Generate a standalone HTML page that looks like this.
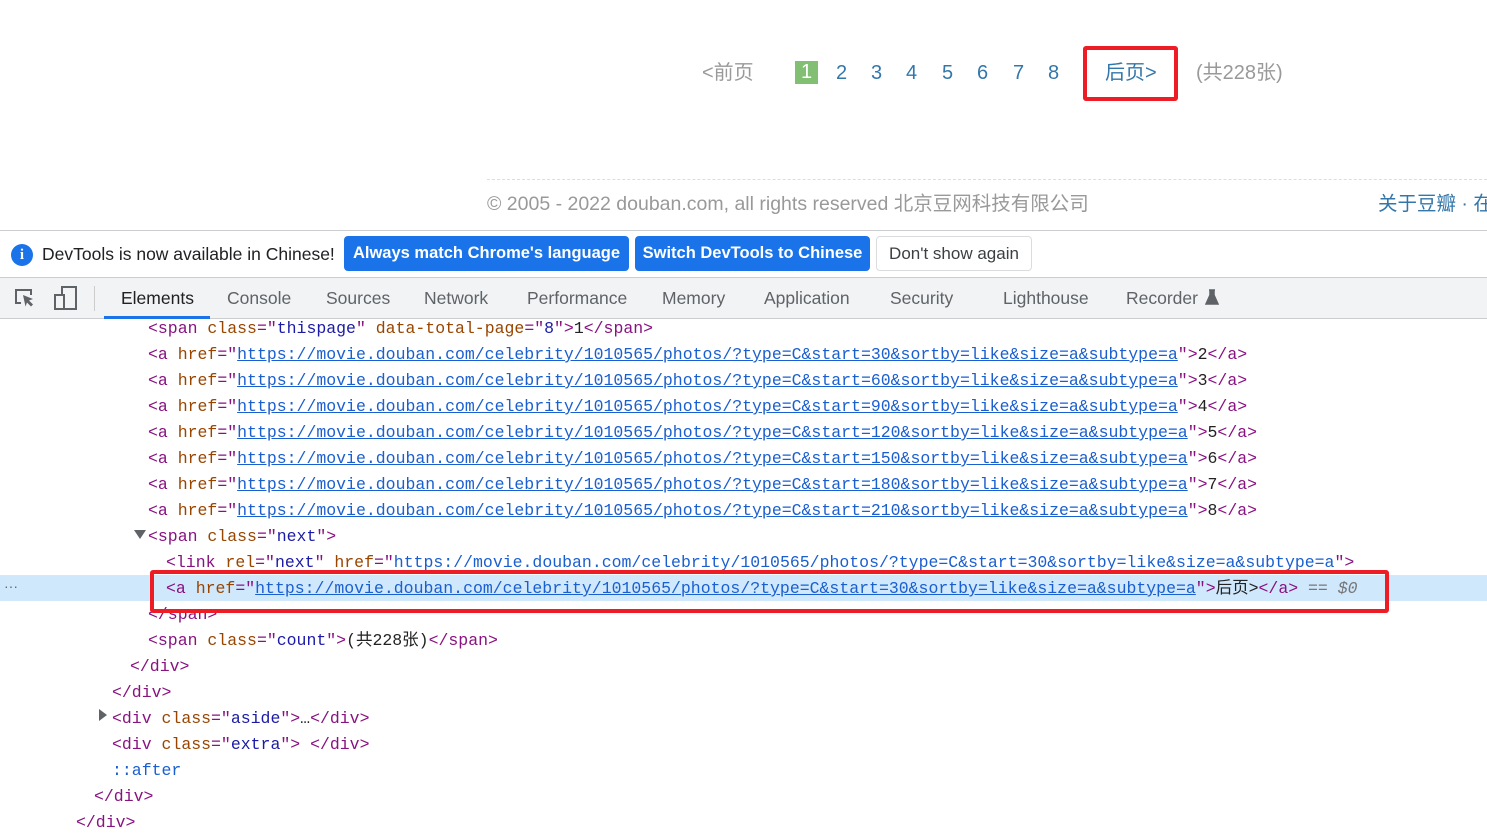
<!DOCTYPE html>
<html><head><meta charset="utf-8"><style>
*{margin:0;padding:0;box-sizing:border-box}
body{width:1487px;height:837px;overflow:hidden;background:#fff;position:relative;font-family:"Liberation Sans","Noto Sans CJK SC",sans-serif}
.a{position:absolute;white-space:nowrap}
.pg{font-size:20px;top:61px;line-height:24px;height:24px;color:#37a}
.code{position:absolute;font-family:"Liberation Mono","Noto Sans CJK SC",monospace;font-size:16.5px;white-space:nowrap;line-height:26px;height:26px;color:#222}
.t{color:#881280}.n{color:#994500}.v{color:#1a1aa6}.u{color:#1a5fd0;text-decoration:underline}
.tab{position:absolute;top:288px;font-size:17.5px;color:#5f6368}
.btn{position:absolute;top:236px;height:35px;background:#1a73e8;border-radius:4px;color:#fff;font-size:16.5px;font-weight:bold;text-align:center;line-height:35px;white-space:nowrap}
</style></head><body>
<div class="a pg" style="left:702px;color:#999">&lt;前页</div>
<div class="a" style="left:795px;top:61px;width:23px;height:23px;background:#83bf73;color:#fff;font-size:20px;text-align:center;line-height:23px">1</div>
<div class="a pg" style="left:836px">2</div>
<div class="a pg" style="left:871px">3</div>
<div class="a pg" style="left:906px">4</div>
<div class="a pg" style="left:942px">5</div>
<div class="a pg" style="left:977px">6</div>
<div class="a pg" style="left:1013px">7</div>
<div class="a pg" style="left:1048px">8</div>
<div class="a pg" style="left:1105px">后页&gt;</div>
<div class="a pg" style="left:1196px;color:#999">(共228张)</div>
<div class="a" style="left:1083px;top:46px;width:95px;height:55px;border:4px solid #ee1c25;border-radius:3px"></div>
<div class="a" style="left:487px;top:179px;width:1000px;border-top:1px dashed #ddd"></div>
<div class="a" style="left:487px;top:192px;font-size:19.5px;line-height:24px;color:#999">© 2005 - 2022 douban.com, all rights reserved 北京豆网科技有限公司</div>
<div class="a" style="left:1378px;top:192px;font-size:19.5px;line-height:24px;color:#37a">关于豆瓣 · 在</div>

<div class="a" style="left:0;top:230px;width:1487px;height:48px;border-top:1px solid #cbcdd1;border-bottom:1px solid #cbcdd1;background:#fff"></div>
<div class="a" style="left:11px;top:244px;width:22px;height:22px;border-radius:50%;background:#1a73e8;color:#fff;font-size:15px;font-weight:bold;text-align:center;line-height:22px;font-family:'Liberation Serif',serif">i</div>
<div class="a" style="left:42px;top:244px;font-size:17.5px;color:#202124">DevTools is now available in Chinese!</div>
<div class="btn" style="left:344px;width:285px">Always match Chrome's language</div>
<div class="btn" style="left:635px;width:235px">Switch DevTools to Chinese</div>
<div class="a" style="left:876px;top:236px;width:156px;height:35px;background:#fff;border:1px solid #dadce0;border-radius:4px;color:#3c4043;font-size:17px;text-align:center;line-height:33px">Don't show again</div>

<div class="a" style="left:0;top:278px;width:1487px;height:41px;background:#f1f3f4;border-bottom:1px solid #cbcdd1"></div>
<svg class="a" style="left:13px;top:286px" width="24" height="24" viewBox="0 0 24 24"><path d="M8 17H3V4h15v5" fill="none" stroke="#5f6368" stroke-width="2"/><path d="M10 9l10 4-4 1.5 4 4-2 2-4-4-1.5 4z" fill="#5f6368"/></svg>
<svg class="a" style="left:52px;top:285px" width="26" height="26" viewBox="0 0 26 26"><rect x="10" y="2" width="14" height="22" fill="none" stroke="#5f6368" stroke-width="2"/><rect x="3" y="10" width="9" height="14" fill="#f1f3f4" stroke="#5f6368" stroke-width="2"/></svg>
<div class="a" style="left:94px;top:286px;width:1px;height:25px;background:#ccc"></div>
<div class="tab" style="left:121px;color:#202124">Elements</div>
<div class="a" style="left:104px;top:316px;width:106px;height:3px;background:#1a73e8"></div>
<div class="tab" style="left:227px">Console</div>
<div class="tab" style="left:326px">Sources</div>
<div class="tab" style="left:424px">Network</div>
<div class="tab" style="left:527px">Performance</div>
<div class="tab" style="left:662px">Memory</div>
<div class="tab" style="left:764px">Application</div>
<div class="tab" style="left:890px">Security</div>
<div class="tab" style="left:1003px">Lighthouse</div>
<div class="tab" style="left:1126px">Recorder</div>
<svg class="a" style="left:1205px;top:289px" width="14" height="16" viewBox="0 0 14 16"><path d="M4 1h6M5 1v5L1 15h12L9 6V1" fill="#5f6368" stroke="#5f6368" stroke-width="1.5"/></svg>

<div class="a" style="left:0;top:575px;width:1487px;height:26px;background:#cfe8fc"></div>
<div class="a" style="left:4px;top:578px;font-size:14px;color:#666">···</div>
<div class="code" style="left:148px;top:316px"><span class="t">&lt;span </span><span class="n">class</span><span class="t">="</span><span class="v">thispage</span><span class="t">" </span><span class="n">data-total-page</span><span class="t">="</span><span class="v">8</span><span class="t">"&gt;</span>1<span class="t">&lt;/span&gt;</span></div>
<div class="code" style="left:148px;top:342px"><span class="t">&lt;a </span><span class="n">href</span><span class="t">="</span><span class="u">https://movie.douban.com/celebrity/1010565/photos/?type=C&amp;start=30&amp;sortby=like&amp;size=a&amp;subtype=a</span><span class="t">"&gt;</span>2<span class="t">&lt;/a&gt;</span></div>
<div class="code" style="left:148px;top:368px"><span class="t">&lt;a </span><span class="n">href</span><span class="t">="</span><span class="u">https://movie.douban.com/celebrity/1010565/photos/?type=C&amp;start=60&amp;sortby=like&amp;size=a&amp;subtype=a</span><span class="t">"&gt;</span>3<span class="t">&lt;/a&gt;</span></div>
<div class="code" style="left:148px;top:394px"><span class="t">&lt;a </span><span class="n">href</span><span class="t">="</span><span class="u">https://movie.douban.com/celebrity/1010565/photos/?type=C&amp;start=90&amp;sortby=like&amp;size=a&amp;subtype=a</span><span class="t">"&gt;</span>4<span class="t">&lt;/a&gt;</span></div>
<div class="code" style="left:148px;top:420px"><span class="t">&lt;a </span><span class="n">href</span><span class="t">="</span><span class="u">https://movie.douban.com/celebrity/1010565/photos/?type=C&amp;start=120&amp;sortby=like&amp;size=a&amp;subtype=a</span><span class="t">"&gt;</span>5<span class="t">&lt;/a&gt;</span></div>
<div class="code" style="left:148px;top:446px"><span class="t">&lt;a </span><span class="n">href</span><span class="t">="</span><span class="u">https://movie.douban.com/celebrity/1010565/photos/?type=C&amp;start=150&amp;sortby=like&amp;size=a&amp;subtype=a</span><span class="t">"&gt;</span>6<span class="t">&lt;/a&gt;</span></div>
<div class="code" style="left:148px;top:472px"><span class="t">&lt;a </span><span class="n">href</span><span class="t">="</span><span class="u">https://movie.douban.com/celebrity/1010565/photos/?type=C&amp;start=180&amp;sortby=like&amp;size=a&amp;subtype=a</span><span class="t">"&gt;</span>7<span class="t">&lt;/a&gt;</span></div>
<div class="code" style="left:148px;top:498px"><span class="t">&lt;a </span><span class="n">href</span><span class="t">="</span><span class="u">https://movie.douban.com/celebrity/1010565/photos/?type=C&amp;start=210&amp;sortby=like&amp;size=a&amp;subtype=a</span><span class="t">"&gt;</span>8<span class="t">&lt;/a&gt;</span></div>
<div class="a" style="left:134px;top:530px;width:0;height:0;border-left:6px solid transparent;border-right:6px solid transparent;border-top:9px solid #5f6368"></div>
<div class="code" style="left:148px;top:524px"><span class="t">&lt;span </span><span class="n">class</span><span class="t">="</span><span class="v">next</span><span class="t">"&gt;</span></div>
<div class="code" style="left:166px;top:550px"><span class="t">&lt;link </span><span class="n">rel</span><span class="t">="</span><span class="v">next</span><span class="t">" </span><span class="n">href</span><span class="t">="</span><span class="u" style="text-decoration:none">https://movie.douban.com/celebrity/1010565/photos/?type=C&amp;start=30&amp;sortby=like&amp;size=a&amp;subtype=a</span><span class="t">"&gt;</span></div>
<div class="code" style="left:166px;top:576px"><span class="t">&lt;a </span><span class="n">href</span><span class="t">="</span><span class="u">https://movie.douban.com/celebrity/1010565/photos/?type=C&amp;start=30&amp;sortby=like&amp;size=a&amp;subtype=a</span><span class="t">"&gt;</span>后页&gt;<span class="t">&lt;/a&gt;</span> <i style="color:#777">== $0</i></div>
<div class="code" style="left:148px;top:602px"><span class="t">&lt;/span&gt;</span></div>
<div class="a" style="left:150px;top:570px;width:1239px;height:43px;border:4px solid #ee1c25;border-radius:3px"></div>
<div class="code" style="left:148px;top:628px"><span class="t">&lt;span </span><span class="n">class</span><span class="t">="</span><span class="v">count</span><span class="t">"&gt;</span>(共228张)<span class="t">&lt;/span&gt;</span></div>
<div class="code" style="left:130px;top:654px"><span class="t">&lt;/div&gt;</span></div>
<div class="code" style="left:112px;top:680px"><span class="t">&lt;/div&gt;</span></div>
<div class="a" style="left:99px;top:709px;width:0;height:0;border-top:6px solid transparent;border-bottom:6px solid transparent;border-left:8px solid #5f6368"></div>
<div class="code" style="left:112px;top:706px"><span class="t">&lt;div </span><span class="n">class</span><span class="t">="</span><span class="v">aside</span><span class="t">"&gt;</span>…<span class="t">&lt;/div&gt;</span></div>
<div class="code" style="left:112px;top:732px"><span class="t">&lt;div </span><span class="n">class</span><span class="t">="</span><span class="v">extra</span><span class="t">"&gt; &lt;/div&gt;</span></div>
<div class="code" style="left:112px;top:758px;color:#1a5fd0">::after</div>
<div class="code" style="left:94px;top:784px"><span class="t">&lt;/div&gt;</span></div>
<div class="code" style="left:76px;top:810px"><span class="t">&lt;/div&gt;</span></div>
</body></html>
